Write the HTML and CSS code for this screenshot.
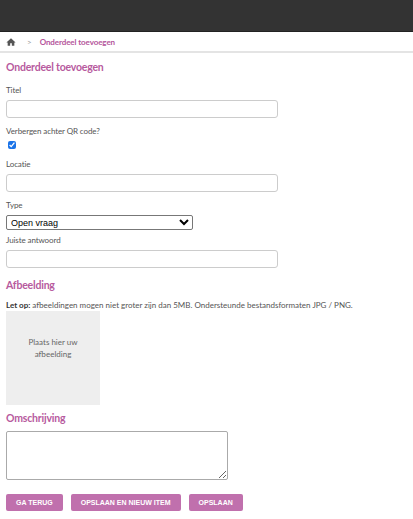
FILE: index.html
```html
<!DOCTYPE html>
<html lang="nl">

<head>
    <meta charset="UTF-8">
    <meta name="viewport" content="width=device-width, initial-scale=1.0">
    <title>Onderdeel toevoegen</title>
    <link rel="stylesheet" href="styles.css">
</head>

<body>
    <div class="topbar"></div>

    <div class="crumbs">
        <svg class="home" viewBox="0 0 24 24" width="10" height="10">
            <path d="M12 3 1 13h3v8h6v-6h4v6h6v-8h3z" fill="#555" />
        </svg>
        <span class="sep">&gt;</span>
        <span class="crumb">Onderdeel toevoegen</span>
    </div>

    <div class="main">
        <h1>Onderdeel toevoegen</h1>
        <form class="frm">
            <label for="titel">Titel</label>
            <input type="text" id="titel" class="txt">

            <label for="qr">Verbergen achter QR code?</label>
            <input type="checkbox" id="qr" class="chk" checked>

            <label for="locatie">Locatie</label>
            <input type="text" id="locatie" class="txt">

            <label for="type">Type</label>
            <select id="type" class="sel">
                <option>Open vraag</option>
            </select>

            <label for="antwoord">Juiste antwoord</label>
            <input type="text" id="antwoord" class="txt">

            <h2>Afbeelding</h2>
            <p class="note"><b>Let op:</b> afbeeldingen mogen niet groter zijn dan 5MB. Ondersteunde bestandsformaten JPG / PNG.</p>
            <div class="drop">Plaats hier uw<br>afbeelding</div>

            <h2>Omschrijving</h2>
            <textarea class="area"></textarea>

            <div class="btns">
                <button type="button">GA TERUG</button>
                <button type="button">OPSLAAN EN NIEUW ITEM</button>
                <button type="submit">OPSLAAN</button>
            </div>
        </form>
    </div>
</body>

</html>
```

FILE: styles.css
```css
* {
    box-sizing: border-box;
    margin: 0;
    padding: 0;
}

body {
    background-color: #fff;
    font-family: "Lato", sans-serif;
    color: #555;
}

.topbar {
    height: 32px;
    background-color: #333;
    border-bottom: 1px solid #222;
}

.crumbs {
    height: 21px;
    display: flex;
    align-items: center;
    padding-left: 6px;
    border-bottom: 2px solid #e4e4e4;
    font-size: 8px;
}

.crumbs .home {
    margin-right: 11px;
}

.crumbs .sep {
    color: #999;
    margin-right: 8px;
}

.crumbs .crumb {
    color: #b5559c;
    font-weight: bold;
    letter-spacing: -0.1px;
}

.main {
    padding: 6px 6px 0;
}

.main h1,
.main h2 {
    color: #b75a9e;
    font-size: 10.5px;
    line-height: 16px;
    font-weight: bold;
    letter-spacing: -0.2px;
}

.main h1 {
    margin-bottom: 9px;
}

.frm {
    display: flex;
    flex-direction: column;
    align-items: flex-start;
}

.frm label {
    font-size: 8px;
    line-height: 12px;
    margin-bottom: 4px;
    letter-spacing: -0.1px;
}

.frm .txt {
    width: 272px;
    height: 18px;
    border: 1px solid #ccc;
    border-radius: 3px;
    margin-bottom: 7px;
}

.frm .chk {
    width: 8px;
    height: 8px;
    margin: 0 0 9px 2px;
    accent-color: #1a73e8;
}

.frm .sel {
    width: 187px;
    height: 15px;
    font-family: "Liberation Sans", sans-serif;
    font-size: 9px;
    color: #000;
    border: 1px solid #777;
    border-radius: 2px;
    background: #fff;
    margin-bottom: 4px;
}

.frm h2 {
    margin-top: 2px;
}

.frm .note {
    font-size: 8px;
    line-height: 12px;
    margin-top: 6px;
}

.frm .note b {
    color: #333;
}

.drop {
    width: 94px;
    height: 94px;
    background-color: #eee;
    text-align: center;
    padding-top: 25px;
    font-size: 8px;
    line-height: 12px;
    color: #666;
    margin-bottom: 3px;
}

.area {
    width: 222px;
    height: 49px;
    border: 1px solid #aaa;
    border-radius: 2px;
    margin-top: 5px;
}

.btns {
    display: flex;
    gap: 8px;
    margin-top: 14px;
}

.btns button {
    background-color: #c070ad;
    color: #fff;
    border: none;
    border-radius: 2px;
    height: 17px;
    padding: 0 10px;
    font-family: "Liberation Sans", sans-serif;
    font-size: 7px;
    font-weight: bold;
}
```
